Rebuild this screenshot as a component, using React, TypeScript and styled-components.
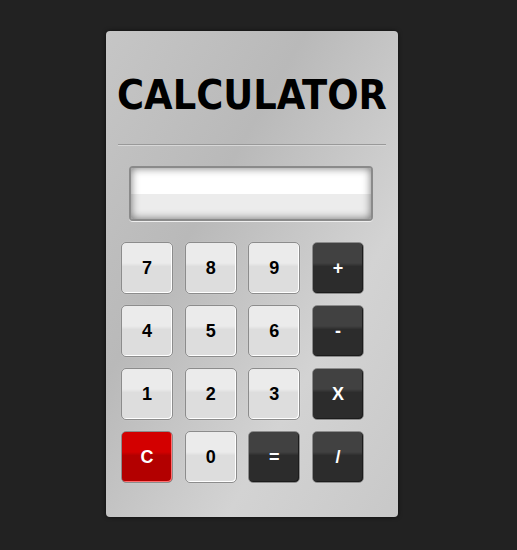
import styled, { createGlobalStyle } from 'styled-components'

const GlobalStyle = createGlobalStyle`
  html, body {
    margin: 0;
    background: #222222;
  }
  body {
    font-family: 'Liberation Sans', Arial, sans-serif;
  }
`

const Page = styled.div`
  padding: 31px 0 0 106px;
  min-height: 550px;
  box-sizing: border-box;
`

const Body = styled.div`
  width: 292px;
  height: 486px;
  box-sizing: border-box;
  border-radius: 4px;
  background: linear-gradient(120deg, #c6c6c6 0%, #b9b9b9 35%, #d3d3d3 70%, #c8c8c8 100%);
  box-shadow: 0 0 4px rgba(0, 0, 0, 0.6);
  display: flex;
  flex-direction: column;
`

const Title = styled.h1`
  margin: 0;
  padding-top: 42px;
  font-family: 'DejaVu Sans Condensed', 'DejaVu Sans', sans-serif;
  font-weight: bold;
  font-size: 41px;
  line-height: 44px;
  text-align: center;
  color: #000;
`

const Divider = styled.hr`
  margin: 27px 12px 0;
  border: 0;
  border-top: 1px solid #999;
  border-bottom: 1px solid #d8d8d8;
`

const Screen = styled.div`
  margin: 20px 0 0 23px;
  width: 244px;
  height: 55px;
  box-sizing: border-box;
  border: 2px solid #8a8a8a;
  border-radius: 4px;
  background: linear-gradient(to bottom, #ffffff 0%, #ffffff 50%, #ececec 51%, #ececec 100%);
  box-shadow: inset 0 0 8px rgba(0, 0, 0, 0.55), 0 1px 0 #eee;
`

const Keypad = styled.div`
  margin: 21px 0 0 15px;
  display: grid;
  grid-template-columns: repeat(4, 52px);
  grid-auto-rows: 52px;
  column-gap: 11.7px;
  row-gap: 11px;
`

type Tone = 'light' | 'dark' | 'red'

const tones: Record<Tone, { top: string; bottom: string; edge: string; text: string }> = {
  light: { top: '#ebebeb', bottom: '#dddddd', edge: '#ffffff', text: '#000' },
  dark: { top: '#414141', bottom: '#2c2c2c', edge: '#1c1c1c', text: '#fff' },
  red: { top: '#d30000', bottom: '#b30000', edge: '#ff7070', text: '#fff' },
}

const Key = styled.button<{ $tone: Tone }>`
  padding: 0;
  border: 1px solid #8c8c8c;
  border-radius: 5px;
  background: ${({ $tone }) =>
    `linear-gradient(to bottom, ${tones[$tone].top} 0%, ${tones[$tone].top} 40%, ${tones[$tone].bottom} 47%, ${tones[$tone].bottom} 100%)`};
  box-shadow: inset -1px -1px 0 ${({ $tone }) => tones[$tone].edge}, 0 0 1px rgba(255, 255, 255, 0.5);
  color: ${({ $tone }) => tones[$tone].text};
  font-family: 'Liberation Sans', Arial, sans-serif;
  font-weight: bold;
  font-size: 18px;
  cursor: pointer;
`

const keys: { label: string; tone: Tone }[] = [
  { label: '7', tone: 'light' },
  { label: '8', tone: 'light' },
  { label: '9', tone: 'light' },
  { label: '+', tone: 'dark' },
  { label: '4', tone: 'light' },
  { label: '5', tone: 'light' },
  { label: '6', tone: 'light' },
  { label: '-', tone: 'dark' },
  { label: '1', tone: 'light' },
  { label: '2', tone: 'light' },
  { label: '3', tone: 'light' },
  { label: 'X', tone: 'dark' },
  { label: 'C', tone: 'red' },
  { label: '0', tone: 'light' },
  { label: '=', tone: 'dark' },
  { label: '/', tone: 'dark' },
]

function App() {
  return (
    <Page>
      <GlobalStyle />
      <Body>
        <Title>CALCULATOR</Title>
        <Divider />
        <Screen />
        <Keypad>
          {keys.map((k) => (
            <Key key={k.label} $tone={k.tone}>
              {k.label}
            </Key>
          ))}
        </Keypad>
      </Body>
    </Page>
  )
}

export default App
